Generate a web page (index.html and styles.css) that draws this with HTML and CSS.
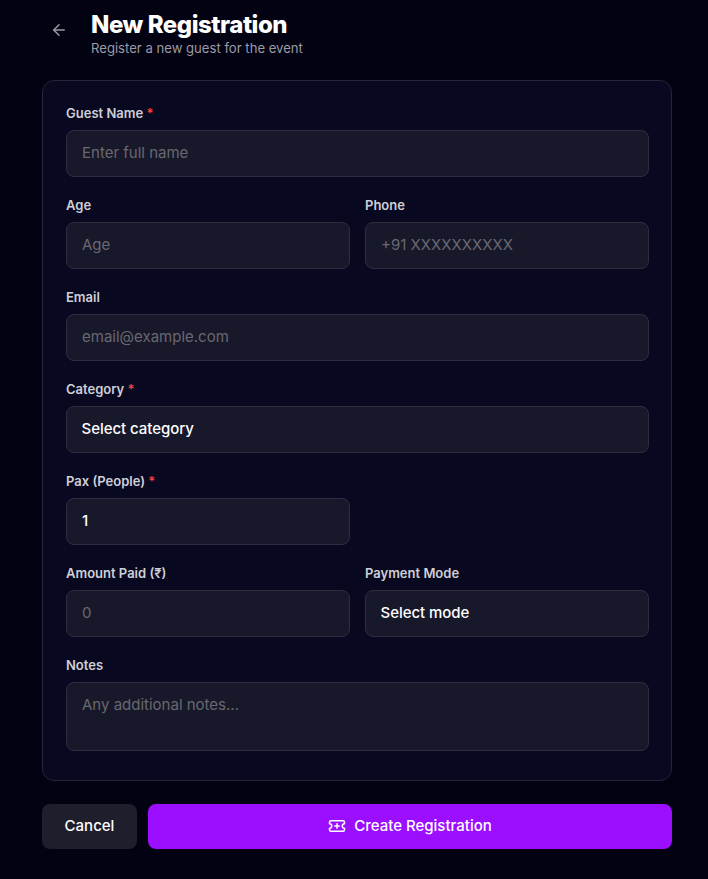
FILE: index.html
```html
<!DOCTYPE html>
<html lang="en">
<head>
    <meta charset="UTF-8">
    <meta name="viewport" content="width=device-width, initial-scale=1.0">
    <title>New Registration</title>
    <link rel="stylesheet" href="styles.css">
</head>
<body>

    <header class="page-header">
        <button class="back-btn" type="button" aria-label="Back">
            <svg width="18" height="18" viewBox="0 0 24 24" fill="none" stroke="currentColor" stroke-width="2" stroke-linecap="round" stroke-linejoin="round"><path d="m12 19-7-7 7-7"/><path d="M19 12H5"/></svg>
        </button>
        <div>
            <h1>New Registration</h1>
            <p>Register a new guest for the event</p>
        </div>
    </header>

    <form class="card">
        <div class="form-group">
            <label for="name">Guest Name <span class="req">*</span></label>
            <input type="text" id="name" placeholder="Enter full name">
        </div>
        <div class="form-row">
            <div class="form-group">
                <label for="age">Age</label>
                <input type="text" id="age" placeholder="Age">
            </div>
            <div class="form-group">
                <label for="phone">Phone</label>
                <input type="text" id="phone" placeholder="+91 XXXXXXXXXX">
            </div>
        </div>
        <div class="form-group">
            <label for="email">Email</label>
            <input type="text" id="email" placeholder="email@example.com">
        </div>
        <div class="form-group">
            <label for="category">Category <span class="req">*</span></label>
            <button class="select" id="category" type="button">Select category</button>
        </div>
        <div class="form-row">
            <div class="form-group">
                <label for="pax">Pax (People) <span class="req">*</span></label>
                <input class="filled" type="text" id="pax" value="1">
            </div>
        </div>
        <div class="form-row">
            <div class="form-group">
                <label for="amount">Amount Paid (₹)</label>
                <input type="text" id="amount" placeholder="0">
            </div>
            <div class="form-group">
                <label for="mode">Payment Mode</label>
                <button class="select" id="mode" type="button">Select mode</button>
            </div>
        </div>
        <div class="form-group">
            <label for="notes">Notes</label>
            <textarea id="notes" placeholder="Any additional notes..."></textarea>
        </div>
    </form>

    <div class="actions">
        <button class="btn btn-cancel" type="button">Cancel</button>
        <button class="btn btn-primary" type="button">
            <svg width="18" height="18" viewBox="0 0 24 24" fill="none" stroke="currentColor" stroke-width="2" stroke-linecap="round" stroke-linejoin="round"><path d="M2 9a3 3 0 0 1 0 6v2a2 2 0 0 0 2 2h16a2 2 0 0 0 2-2v-2a3 3 0 0 1 0-6V7a2 2 0 0 0-2-2H4a2 2 0 0 0-2 2Z"/><path d="M9 12h6"/><path d="M12 9v6"/></svg>
            Create Registration
        </button>
    </div>

</body>
</html>
```

FILE: styles.css
```css
* {
    box-sizing: border-box;
}
html, body {
    height: 100%;
}
body {
    font-family: Inter, sans-serif;
    background-color: #020212;
    color: #fff;
    margin: 0;
    padding: 8px 36px 0 42px;
    overflow: hidden;
}
.page-header {
    display: flex;
    align-items: flex-start;
    gap: 16px;
    height: 72px;
}
.back-btn {
    width: 33px;
    height: 33px;
    margin-top: 5px;
    background: none;
    border: none;
    padding: 0;
    color: #9b9ba6;
    display: flex;
    align-items: center;
    justify-content: center;
}
h1 {
    font-family: Inter, sans-serif;
    font-size: 24px;
    font-weight: 800;
    line-height: 32px;
    letter-spacing: -0.45px;
    margin: 1px 0 -1px;
    color: #fff;
}
.page-header p {
    font-size: 13.12px;
    line-height: 16px;
    margin: 0;
    color: #9b9ba6;
}
.card {
    height: 701px;
    padding: 22px 22px 0 23px;
    background-color: #080820;
    border: 1px solid #25253a;
    border-radius: 12px;
    display: flex;
    flex-direction: column;
    gap: 18px;
}
.form-row {
    display: grid;
    grid-template-columns: 1fr 1fr;
    gap: 15px;
}
label {
    display: block;
    font-size: 13px;
    font-weight: 600;
    line-height: 20px;
    margin-bottom: 7px;
    color: #cfcfd6;
}
.req {
    color: #ef4444;
}
input, textarea, .select {
    display: block;
    width: 100%;
    height: 47px;
    padding: 0 15px 2px;
    background-color: #18182b;
    border: 1px solid #2e2e42;
    border-radius: 8px;
    font-family: Inter, sans-serif;
    font-size: 15px;
    color: #fff;
    outline: none;
    text-align: left;
}
input::placeholder, textarea::placeholder {
    color: #68686f;
    opacity: 1;
}
.filled, .select {
    font-weight: 500;
}
.select {
    padding-left: 14.5px;
    letter-spacing: -0.05px;
}
textarea {
    height: 69px;
    padding: 12px 15px;
    resize: none;
}
.actions {
    display: flex;
    gap: 11px;
    margin-top: 23px;
}
.btn {
    height: 45px;
    padding: 0 0 2px;
    border: none;
    border-radius: 8px;
    font-family: Inter, sans-serif;
    font-size: 15px;
    font-weight: 500;
    color: #fff;
}
.btn-cancel {
    width: 95px;
    background-color: #1e1e2c;
}
.btn-primary {
    flex: 1;
    background-color: #9b0eff;
    display: flex;
    align-items: center;
    justify-content: center;
    gap: 8px;
}
```
